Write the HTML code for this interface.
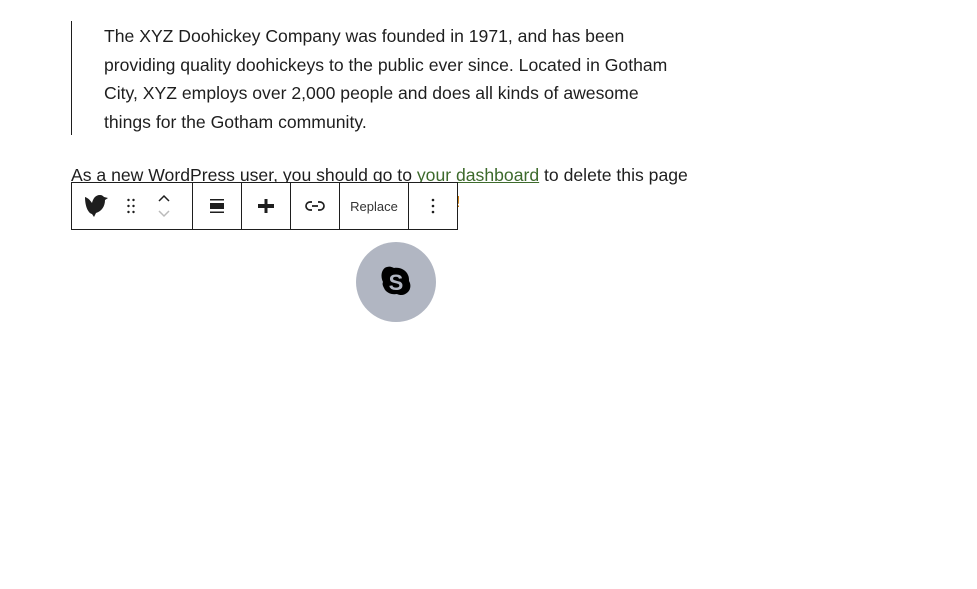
<!DOCTYPE html>
<html><head><style>
body{margin:0;background:#fff;font-family:"Liberation Sans",sans-serif;color:#1e1e1e;}
.q{position:absolute;left:71px;top:21px;width:0;height:114px;border-left:1px solid #1e1e1e;}
.qt{position:absolute;left:104px;top:22px;width:578px;font-size:17.6px;line-height:28.7px;}
.p{position:absolute;left:71px;top:162px;font-size:17.6px;line-height:26px;white-space:nowrap;}
.p a{color:#3d6a2c;text-decoration:underline;}
.u{text-decoration:underline;}
.tb{position:absolute;left:71px;top:182px;width:385px;height:46px;border:1px solid #1e1e1e;background:#fff;display:flex;}
.tb>div{border-right:1px solid #1e1e1e;height:46px;display:flex;align-items:center;justify-content:center;}
.tb>div:last-child{border-right:none}
.c{position:absolute;left:356px;top:242px;width:80px;height:80px;border-radius:50%;background:#b1b6c2;}
.c svg{position:absolute;left:22px;top:23px}
</style></head><body>
<div class="q"></div>
<div class="qt">The XYZ Doohickey Company was founded in 1971, and has been providing quality doohickeys to the public ever since. Located in Gotham City, XYZ employs over 2,000 people and does all kinds of awesome things for the Gotham community.</div>
<div class="p"><span class="u">As a new WordPress user, you should go to</span> <a>your dashboard</a> to delete this page</div>
<span style="position:absolute;left:456px;top:194px;color:#c87400;font-size:16px">!</span>
<div class="tb">
<div style="width:120px;justify-content:flex-start">
<svg style="margin-left:12px" width="26" height="26" viewBox="0 0 26 26"><path d="M1 4c3 1 5 3 7 6 1-4 3-8 8-8 2 0 3 1 4 2l4 1-3 2c0 6-3 11-9 13l-2 4-2-3C4 20 1 13 1 4z" fill="#1e1e1e"/></svg>
<svg style="margin-left:17px" width="8" height="16"><g fill="#1e1e1e"><circle cx="1.5" cy="2" r="1.2"/><circle cx="6.5" cy="2" r="1.2"/><circle cx="1.5" cy="8" r="1.2"/><circle cx="6.5" cy="8" r="1.2"/><circle cx="1.5" cy="14" r="1.2"/><circle cx="6.5" cy="14" r="1.2"/></g></svg>
<svg style="margin-left:22px" width="14" height="26"><path d="M2 8l5-5 5 5" stroke="#1e1e1e" stroke-width="1.5" fill="none"/><path d="M2 18l5 5 5-5" stroke="#bbb" stroke-width="1.5" fill="none"/></svg>
</div>
<div style="width:48px"><svg width="16" height="16"><rect x="1" y="1" width="14" height="1.5" fill="#1e1e1e"/><rect x="1" y="5" width="14" height="6" fill="#1e1e1e"/><rect x="1" y="13.5" width="14" height="1.5" fill="#1e1e1e"/></svg></div>
<div style="width:48px"><svg width="18" height="18"><rect x="7.5" y="2" width="3" height="14" fill="#1e1e1e"/><rect x="1" y="7" width="16" height="4" fill="#1e1e1e"/></svg></div>
<div style="width:48px"><svg width="20" height="12"><path d="M7 2H5a4 4 0 000 8h2M13 2h2a4 4 0 010 8h-2M7 6h6" stroke="#1e1e1e" stroke-width="1.7" fill="none"/></svg></div>
<div style="width:68px;font-size:13px;color:#333">Replace</div>
<div style="width:48px"><svg width="4" height="16"><g fill="#1e1e1e"><circle cx="2" cy="2" r="1.3"/><circle cx="2" cy="8" r="1.3"/><circle cx="2" cy="14" r="1.3"/></g></svg></div>
</div>
<div class="c"><svg width="36" height="34" viewBox="0 0 36 34"><path d="M9 2c3-1 5 0 7 1 6-1 12 2 14 7 1 2 1 4 1 6 2 3 2 8-1 11s-7 4-11 2c-5 1-11-1-13-6-1-2-2-4-1-6C3 13 3 8 5 5c1-2 3-3 4-3z" fill="#000"/><text x="18" y="25" font-family="Liberation Sans" font-weight="bold" font-size="22" fill="#b1b6c2" text-anchor="middle">S</text></svg></div>
</body></html>
